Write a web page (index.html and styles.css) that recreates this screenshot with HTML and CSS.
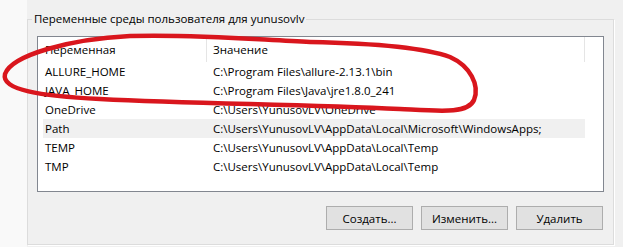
FILE: index.html
```html
<!DOCTYPE html>
<html lang="ru">
<head>
    <meta charset="UTF-8">
    <meta name="viewport" content="width=device-width, initial-scale=1.0">
    <title>Переменные среды</title>
    <link rel="stylesheet" href="styles.css">
</head>
<body>
    <div class="window">
        <div class="edge"></div>
        <fieldset class="group">
            <legend>Переменные среды пользователя для yunusovlv</legend>
            <div class="list">
                <div class="list-head">
                    <div class="head-name">Переменная</div>
                    <div class="head-value">Значение</div>
                </div>
                <div class="row">
                    <div class="cell-name">ALLURE_HOME</div>
                    <div class="cell-value">C:\Program Files\allure-2.13.1\bin</div>
                </div>
                <div class="row">
                    <div class="cell-name">JAVA_HOME</div>
                    <div class="cell-value">C:\Program Files\Java\jre1.8.0_241</div>
                </div>
                <div class="row">
                    <div class="cell-name">OneDrive</div>
                    <div class="cell-value">C:\Users\YunusovLV\OneDrive</div>
                </div>
                <div class="row selected">
                    <div class="cell-name">Path</div>
                    <div class="cell-value">C:\Users\YunusovLV\AppData\Local\Microsoft\WindowsApps;</div>
                </div>
                <div class="row">
                    <div class="cell-name">TEMP</div>
                    <div class="cell-value">C:\Users\YunusovLV\AppData\Local\Temp</div>
                </div>
                <div class="row">
                    <div class="cell-name">TMP</div>
                    <div class="cell-value">C:\Users\YunusovLV\AppData\Local\Temp</div>
                </div>
            </div>
            <div class="buttons">
                <button class="btn">Создать...</button>
                <button class="btn">Изменить...</button>
                <button class="btn">Удалить</button>
            </div>
        </fieldset>
    </div>

    <!-- красная обводка поверх списка -->
    <svg class="marker" width="623" height="247" viewBox="0 0 623 247">
        <path d="M 310 42 C 260 40, 200 34, 130 36 C 70 39, 12 55, 5 74 C 1 90, 40 96, 100 99 C 200 104, 300 104, 400 109 C 440 111, 468 114, 474 100 C 480 85, 470 66, 450 57 C 420 46, 360 43, 310 42 Z"
              fill="none" stroke="#d9161d" stroke-width="4.5" stroke-linejoin="round"/>
    </svg>
</body>
</html>
```

FILE: styles.css
```css
/* Базовые стили */
body {
    margin: 0;
    width: 623px;
    height: 247px;
    overflow: hidden;
    background-color: #f0f0f0;
    font-family: "Open Sans", "Noto Sans", sans-serif;
    font-size: 11.5px;
    color: #000;
    position: relative;
}

.window {
    display: flex;
    height: 247px;
}

.edge {
    width: 27px;
    background-color: #f9f9f9;
}

/* Групповая рамка */
.group {
    flex: 1;
    margin: 11px 9px 2px 0;
    padding: 9px 9px 14px 9px;
    border: 1px solid #dcdcdc;
    box-shadow: 1px 1px 0 #fff;
    min-width: 0;
}

.group legend {
    margin-left: -5px;
    padding: 0 2px;
    line-height: 16px;
}

/* Список */
.list {
    height: 154px;
    border: 1px solid #828790;
    background-color: #fff;
}

.list-head {
    display: flex;
    height: 25px;
    line-height: 25px;
}

.head-name {
    width: 161px;
    padding-left: 7px;
    border-right: 1px solid #e5e5e5;
}

.head-value {
    width: 371px;
    padding-left: 6px;
    border-right: 1px solid #e5e5e5;
}

.row {
    display: flex;
    width: 542px;
    margin-left: 5px;
    height: 19px;
    line-height: 19px;
    white-space: nowrap;
}

.row.selected {
    background-color: #f0f0f0;
}

.cell-name {
    width: 161px;
    padding-left: 2px;
}

.cell-value {
    width: 372px;
    padding-left: 7px;
}

/* Кнопки */
.buttons {
    display: flex;
    justify-content: flex-end;
    gap: 8px;
    margin-top: 14px;
    margin-right: 1px;
}

.btn {
    width: 87px;
    height: 24px;
    padding: 0;
    border: 1px solid #adadad;
    background-color: #e1e1e1;
    font-family: inherit;
    font-size: inherit;
    color: #000;
}

/* Обводка маркером */
.marker {
    position: absolute;
    top: 0;
    left: 0;
    pointer-events: none;
}
```
